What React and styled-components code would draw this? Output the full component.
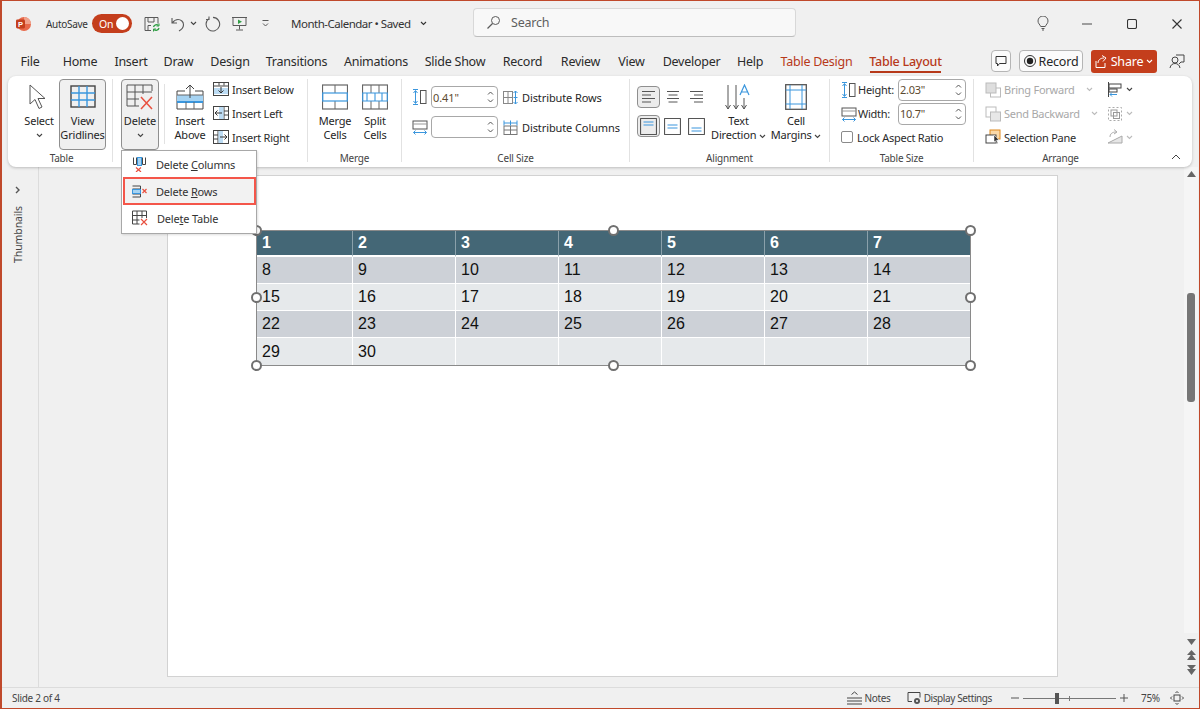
import React from 'react';
import styled, { createGlobalStyle } from 'styled-components';

const Global = createGlobalStyle`
  html, body { margin: 0; padding: 0; background: #f0f0f0; }
  * { box-sizing: border-box; }
  #root { width: 1200px; height: 709px; overflow: hidden; }
`;
const UI = `"Noto Sans", "Open Sans", sans-serif`;
const RED = '#c43e1c';
const BLUE = '#3a96dd';
const GR = '#5a5a5a';
const XR = '#e8503f';

const Win = styled.div`
  width: 1200px; height: 709px; display: flex; flex-direction: column; overflow: hidden; position: relative;
  background: #f0f0f0; border: 1px solid #c0492b; border-left-width: 2px;
  font-family: ${UI}; color: #262626; font-size: 11px; letter-spacing: -0.2px;
`;
const TitleBar = styled.div`display: flex; align-items: center; height: 45px; flex: none; position: relative;`;
const Slot = styled.div`
  flex: none; display: flex; align-items: center; justify-content: center;
  width: ${p => p.$w}px; margin-left: ${p => p.$ml || 0}px;
`;
const AutoSave = styled(Slot)`font-size: 10px; letter-spacing: -0.3px; color: #333; white-space: nowrap; justify-content: flex-start;`;
const Toggle = styled.div`
  width: 40px; height: 19px; flex: none; margin-left: 5px; border-radius: 10px; background: ${RED}; color: #fff;
  display: flex; align-items: center; justify-content: space-between; padding: 0 3px 0 7px; font-size: 10.5px;
`;
const Knob = styled.span`width: 13px; height: 13px; border-radius: 50%; background: #fff;`;
const DocName = styled(Slot)`font-size: 11.5px; color: #333; white-space: nowrap; justify-content: flex-start; letter-spacing: -0.5px;`;
const SearchBox = styled.div`
  flex: none; width: 323px; height: 29px; margin-left: 45px; margin-top: -2px; background: #f8f8f8; border: 1px solid #d8d8d8;
  border-bottom-color: #bdbdbd; border-radius: 4px; display: flex; align-items: center; padding-left: 12px; gap: 10px;
  color: #5e5e5e; font-size: 12.5px;
`;
const TabRow = styled.div`display: flex; align-items: center; height: 30px; flex: none; padding-left: 19px;`;
const Tab = styled.div`
  flex: none; width: ${p => p.$w}px; margin-right: ${p => p.$gap}px; height: 30px; line-height: 31px; text-align: center;
  font-size: 12.5px; white-space: nowrap; position: relative; letter-spacing: -0.25px;
  color: ${p => (p.$ctx ? '#b7391a' : '#2b2b2b')};
  display: flex; justify-content: center;
  ${p => p.$active && `font-weight: 500; &::after { content: ''; position: absolute; left: 0; right: 0; bottom: 3px; height: 2px; background: #b7391a; }`}
`;
const TabTools = styled.div`margin-left: auto; display: flex; align-items: center;`;
const OutlineBtn = styled.div`
  flex: none; height: 22px; width: ${p => p.$w}px; margin-left: ${p => p.$ml}px; background: #fbfbfb; border: 1px solid #b5b5b5; border-radius: 4px;
  display: flex; align-items: center; justify-content: center; gap: 3px; font-size: 12.5px; color: #262626;
`;
const ShareBtn = styled.div`
  flex: none; height: 23px; width: 66px; margin-left: 8px; background: ${RED}; color: #fff; border-radius: 3px;
  display: flex; align-items: center; justify-content: center; gap: 3px; font-size: 12.5px;
`;
const Ribbon = styled.div`
  margin-left: 6px; width: 1184px; height: 91px; flex: none; background: #fff; border-radius: 8px; display: flex; position: relative; z-index: 2;
  box-shadow: 0 1px 3px rgba(0,0,0,.22);
`;
const Group = styled.div`
  flex: none; width: ${p => p.$w}px; height: 83px; margin-top: 3px; display: flex; flex-direction: column;
  border-right: ${p => (p.$last ? 'none' : '1px solid #e2e2e2')};
`;
const Body = styled.div`
  height: 71px; flex: none; display: flex; padding-left: ${p => p.$pl}px; padding-top: ${p => p.$pt || 0}px;
  margin-top: ${p => p.$mt || 0}px; margin-bottom: ${p => -(p.$mt || 0)}px;
`;
const GroupLabel = styled.div`height: 12px; line-height: 16px; text-align: center; font-size: 10px; color: #444; padding-left: ${p => p.$pl || 0}px;`;
const Large = styled.div`
  flex: none; width: ${p => p.$w}px; margin-left: ${p => p.$ml || 0}px; height: 71px; display: flex; flex-direction: column; align-items: center;
  padding-top: 5px; line-height: 14px; text-align: center; font-size: 11px; border-radius: 4px; white-space: nowrap;
  border: 1px solid ${p => (p.$on ? '#8f8f8f' : 'transparent')}; background: ${p => (p.$on ? '#f0f0f0' : 'transparent')};
  & > svg:first-child { flex: none; margin-bottom: 4px; margin-top: -1px; }
`;
const Chev = styled.span`display: inline-flex; vertical-align: middle; margin-left: ${p => p.$ml || 0}px;`;
const ChevLine = styled.span`display: flex; height: 14px; align-items: center; justify-content: center;`;
const VDiv = styled.div`flex: none; width: 1px; height: 60px; background: #e2e2e2; margin: 5px 6px 0 5px;`;
const SmallCol = styled.div`
  display: flex; flex-direction: column; flex: none; margin-left: ${p => p.$ml || 0}px; margin-top: ${p => p.$mt || 0}px;
  ${p => p.$w && `width: ${p.$w}px;`}
`;
const SmallRow = styled.div`
  display: flex; align-items: center; height: 24px; gap: 3px; white-space: nowrap; font-size: 11px; letter-spacing: -0.25px;
  color: ${p => (p.$off ? '#a8a8a8' : '#2b2b2b')};
`;
const FieldLabel = styled.span`flex: none; width: 36px; margin-left: -2px;`;
const SizeStack = styled.div`display: flex; flex-direction: column; gap: 8px; letter-spacing: -0.1px;`;
const SizeRow = styled.div`display: flex; align-items: center; height: 22px; white-space: nowrap;`;
const Num = styled.div`
  flex: none; width: ${p => p.$w}px; height: 22px; margin-left: ${p => p.$ml}px; margin-right: ${p => p.$mr || 0}px; border: 1px solid #a8a8a8; border-radius: 4px; background: #fff;
  display: flex; align-items: center; justify-content: space-between; padding: 0 3px 0 1px; font-size: 11px; color: #5c4a30;
`;
const Spin = styled.span`display: flex; flex-direction: column; gap: 4px;`;
const AlignGrid = styled.div`
  display: grid; grid-template-columns: repeat(3, 23px); grid-auto-rows: 22px; column-gap: 1px; row-gap: 7px; flex: none; margin-top: 7px; align-self: flex-start;
`;
const AlignBtn = styled.div`
  display: flex; align-items: center; justify-content: center; border-radius: 4px;
  border: 1px solid ${p => (p.$on ? '#8f8f8f' : 'transparent')}; background: ${p => (p.$on ? '#ececec' : 'transparent')};
`;
const Check = styled.span`width: 12px; height: 12px; flex: none; border: 1px solid #8a8a8a; border-radius: 2px; background: #fff; margin-right: 1px;`;
const Collapse = styled.div`flex: 1; display: flex; align-items: flex-end; justify-content: center; padding-bottom: 7px; padding-left: 12px;`;
const Main = styled.div`flex: 1; display: flex; min-height: 0; margin-top: -1px;`;
const Rail = styled.div`
  flex: none; width: 37px; border-right: 1px solid #dcdcdc; display: flex; flex-direction: column; align-items: center; padding: 20px 4px 0 0; gap: 12px;
`;
const RailText = styled.div`writing-mode: vertical-rl; transform: rotate(180deg); font-size: 10.5px; color: #444; line-height: 12px; letter-spacing: -0.1px;`;
const Canvas = styled.div`flex: 1; padding: 9px 0 0 128px; min-width: 0;`;
const Slide = styled.div`width: 891px; height: 502px; background: #fff; border: 1px solid #d2d2d2; padding: 54px 0 0 88px;`;
const TableWrap = styled.div`position: relative; width: 715px; height: 136px; border: 1px solid #8a8a8a;`;
const Tbl = styled.table`
  border-collapse: separate; border-spacing: 0; table-layout: fixed; width: 713px; height: 134px; font-family: "Liberation Sans", Arial, sans-serif; font-size: 16px; letter-spacing: 0; color: #111;
`;
const Td = styled.td`
  padding: 0 0 0 5px; width: ${p => p.$w}px; height: ${p => p.$h || 27}px; line-height: 1;
  background: ${p => p.$bg};
  border-right: 1px solid #fff; border-bottom: 1px solid #fff;
  &:last-child { border-right: none; }
  tr:last-child > & { border-bottom: none; }
`;
const HeadCell = styled(Td).attrs({ as: 'th' })`
  color: #fff; font-weight: 700; text-align: left; border-right-color: #8aa0aa; border-bottom: 2px solid #fff;
`;
const Handle = styled.span`
  position: absolute; left: ${p => p.$x}px; top: ${p => p.$y}px; width: 11px; height: 11px; margin: -6px 0 0 -6px;
  border-radius: 50%; background: #fff; border: 2px solid #707070;
`;
const Scroll = styled.div`
  flex: none; width: 14px; margin-right: 1px; margin-top: 1px; background: #f5f5f5; height: 466px; display: flex; flex-direction: column; align-items: center; padding-top: 4px;
`;
const ScrollWrap = styled.div`flex: none; display: flex; flex-direction: column; align-items: center; height: 100%;`;
const Thumb = styled.div`flex: none; width: 8px; height: 109px; border-radius: 3px; background: #767676; margin-top: 116px;`;
const Pager = styled.div`display: flex; flex-direction: column; align-items: center; gap: 5px; margin-top: 6px; margin-right: 1px;`;
const StatusBar = styled.div`
  flex: none; height: 21px; border-top: 1px solid #dcdcdc; display: flex; align-items: center; padding-left: 10px; font-size: 10px; color: #444; letter-spacing: -0.3px;
`;
const StatusRight = styled.div`margin-left: auto; display: flex; align-items: center;`;
const StatusItem = styled.div`
  display: flex; align-items: center; gap: 2px; margin-left: ${p => p.$ml}px; white-space: nowrap;
  ${p => p.$w && `width: ${p.$w}px;`}
`;
const DisplayText = styled.span`letter-spacing: -0.4px;`;
const SliderTrack = styled.div`width: 93px; height: 1px; background: #777; position: relative; margin: 0 2px;`;
const SliderThumb = styled.span`position: absolute; left: 32px; top: -5px; width: 4px; height: 11px; background: #555;`;
const SliderTick = styled.span`position: absolute; left: 46px; top: -2px; width: 1px; height: 5px; background: #777;`;
const Menu = styled.div`
  position: absolute; left: 119px; top: 149px; width: 136px; height: 84px; background: #fff; border: 1px solid #a8a8a8; z-index: 5;
  display: flex; flex-direction: column; padding: 0 0 2px; box-shadow: 1px 1px 2px rgba(0,0,0,.12);
`;
const MenuItem = styled.div`
  flex: 1; display: flex; align-items: center; gap: 9px; padding-left: 10px; font-size: 11px; color: #333; letter-spacing: -0.2px; white-space: nowrap;
  ${p => p.$hot && `margin: 0 0 0 1px; border: 2px solid #f4564a; background: #f2f2f2; padding-left: 7px; height: 28px; flex: none;`}
`;

const Svg = ({ s = 16, w, h, children, ...r }) => (
  <svg width={w || s} height={h || s} viewBox={`0 0 ${w || s} ${h || s}`} fill="none" stroke={GR} strokeWidth="1" {...r}>{children}</svg>
);
const Chevron = ({ c = '#444', s = 7 }) => (
  <svg width={s} height={5} viewBox="0 0 7 5" fill="none" stroke={c} strokeWidth="1.1"><path d="M1 1l2.5 2.5L6 1" /></svg>
);
const Up = () => <svg width={7} height={4} viewBox="0 0 7 4" fill="none" stroke="#555"><path d="M1 3.5l2.5-2.5L6 3.5" /></svg>;
const Dn = () => <svg width={7} height={4} viewBox="0 0 7 4" fill="none" stroke="#555"><path d="M1 .5l2.5 2.5L6 .5" /></svg>;
const Spinner = () => <Spin><Up /><Dn /></Spin>;

const Logo = () => (
  <Svg s={16} stroke="none">
    <circle cx="9" cy="8" r="7" fill="#e8694a" />
    <path d="M9 1a7 7 0 0 1 7 7H9z" fill="#f0a28c" />
    <rect x="1" y="3.5" width="9" height="9" rx="1.4" fill="#c43e1c" />
    <text x="5.4" y="10.8" fontSize="7.5" fill="#fff" textAnchor="middle" fontFamily="Liberation Sans" fontWeight="700">P</text>
  </Svg>
);
const SaveI = () => (
  <Svg s={16}><path d="M1 1.5h13v6M1 1.5v13h6" /><path d="M4 2v4h6V2M4 14V9.5h3" /><path d="M9.5 11a3 3 0 0 1 5-1.5M15 12a3 3 0 0 1-5 1.5" stroke="#2f9e44" strokeWidth="1.3" /><path d="M15 7.5v2.5h-2.5M9.5 15.5V13H12" stroke="#2f9e44" /></Svg>
);
const UndoI = () => <Svg s={16}><path d="M2 2v5h5M2.3 6.8C4 4.5 6 3.5 8 3.5c3 0 5.5 2.3 5.5 5.2 0 2.4-1.6 4.6-4.5 6.3" strokeWidth="1.1" /></Svg>;
const RedoI = () => <Svg s={16}><path d="M4 2.6A6.8 6.8 0 1 0 8 1.4M4 .5v3h-3" strokeWidth="1.1" /></Svg>;
const PresentI = () => <Svg s={15}><path d="M1 1.5h13v8H1zM7.5 9.5v4M4 14h7M0 1.5h15" /><path d="M6 3.5l4 2.2-4 2.2z" fill="#2f9e44" stroke="none" /></Svg>;
const CustomI = () => <Svg s={9}><path d="M1.5 1.5h6M2 4.5l2.5 2.5L7 4.5" /></Svg>;
const SearchI = () => <Svg s={15}><circle cx="9.5" cy="5.5" r="4" /><path d="M6.5 8.5L1.5 13.5" strokeWidth="1.2" /></Svg>;
const BulbI = () => <Svg s={14} w={12} h={15}><path d="M3.7 10.5C3 8.5 1 7.5 1 5a5 5 0 0 1 10 0c0 2.5-2 3.5-2.7 5.5zM4.5 12.5h3M5 14h2" /></Svg>;
const MinI = () => <Svg s={10}><path d="M0 5h10" strokeWidth="1.1" /></Svg>;
const MaxI = () => <Svg s={10}><rect x=".5" y=".5" width="9" height="9" rx="1.6" stroke="#333" strokeWidth="1.1" /></Svg>;
const CloseI = () => <Svg s={10}><path d="M.5.5l9 9M9.5.5l-9 9" stroke="#333" strokeWidth="1.1" /></Svg>;
const CommentI = () => <Svg s={12}><path d="M1 1.5h10v7H4.5L2.5 11V8.5H1z" stroke="#333" /></Svg>;
const RecDot = () => <Svg s={12}><circle cx="6" cy="6" r="5.5" stroke="#333" /><circle cx="6" cy="6" r="3.2" fill="#222" stroke="none" /></Svg>;
const ShareI = () => <Svg s={13} stroke="#fff"><path d="M1 6v6.5h9V8M3 8c0-3 2.5-5 6-5M7 .5L11 3 8 6.5" /></Svg>;
const PersonI = () => <Svg s={16} stroke="#444"><circle cx="6" cy="7" r="3" /><path d="M1 15c.5-3 2.5-4.5 5-4.5s4.500 1.500 5 4.500M7 2h8v7h-3l-2 2" /></Svg>;

const Cursor = () => <Svg w={24} h={26}><path d="M3 1v19l5-4.500 4 9 3-1.500-4-8.500h7z" fill="#fff" stroke="#555" /></Svg>;
const GridView = () => (
  <Svg w={26} h={26}><rect x="1" y="2" width="24" height="21" stroke="#444" strokeWidth="1.4" /><path d="M1 9h24M1 16h24M9 2v21M17 2v21" stroke={BLUE} strokeWidth="1.4" /></Svg>
);
const DeleteT = () => (
  <Svg w={28} h={26}><path d="M1 1h25v6M1 1v21h12M1 8h25M1 15h12M9 1v21M17 1v9" stroke="#555" /><path d="M15 13l11 12M26 13L15 25" stroke={XR} strokeWidth="1.5" /></Svg>
);
const InsAbove = () => (
  <Svg w={28} h={26}><path d="M1 7h8M19 7h8M1 7v18h26V7" stroke="#444" /><rect x="1" y="11" width="26" height="7" fill="#a6d3f2" stroke="none" /><path d="M1 18h26" stroke={BLUE} strokeWidth="2" /><path d="M1 11h26M10 18v7M18 18v7" stroke="#666" /><path d="M14 14V2M10 5l4-4 4 4" stroke="#444" /></Svg>
);
const InsBelow = () => <Svg s={16}><rect x=".5" y="1.500" width="15" height="13" stroke="#444" /><path d="M.5 5h15M6 1.500v3M11 1.500v3" stroke="#444" /><rect x="1" y="7" width="14" height="6" fill="#bcdcf4" stroke="none" /><path d="M8 6v6M5.500 9.500L8 12l2.500-2.500" stroke="#333" /></Svg>;
const InsLeft = () => <Svg s={16}><rect x=".5" y="1.500" width="15" height="13" stroke="#444" /><path d="M11 1.500v13M11 6h4M11 10h4" stroke="#444" /><rect x="6" y="2" width="4.500" height="12" fill="#bcdcf4" stroke="none" /><path d="M9 8H2M4.500 5.500L2 8l2.500 2.500" stroke="#333" /></Svg>;
const InsRight = () => <Svg s={16}><rect x=".5" y="1.500" width="15" height="13" stroke="#444" /><path d="M5 1.500v13M1 6h4M1 10h4" stroke="#444" /><rect x="5.500" y="2" width="4.500" height="12" fill="#bcdcf4" stroke="none" /><path d="M7 8h7M11.500 5.500L14 8l-2.500 2.500" stroke="#333" /></Svg>;
const MergeI = () => (
  <Svg w={26} h={26}><rect x=".5" y="1" width="25" height="24" stroke="#666" strokeWidth="1.2" /><path d="M13 1v8M13 17v8" stroke="#666" /><rect x=".7" y="9" width="24.600" height="8" stroke={BLUE} strokeWidth="1.2" /></Svg>
);
const SplitI = () => (
  <Svg w={26} h={26}><rect x=".5" y="1" width="25" height="24" stroke="#666" strokeWidth="1.2" /><path d="M9 1v8M17 1v8M9 17v8M17 17v8" stroke="#666" /><path d="M.7 9h24.600v8H.7zM5 9v8M13 9v8M20 9v8" stroke={BLUE} strokeWidth="1.100" /></Svg>
);
const HeightI = () => <Svg s={16}><path d="M3.500 2v12M1.500 4l2-2.500 2 2.500M1.500 12l2 2.500 2-2.500M1 .5h5M1 15.500h5" stroke={BLUE} /><rect x="8.500" y="1.500" width="5.500" height="13" stroke="#555" /></Svg>;
const WidthI = () => <Svg s={16}><rect x="1" y="2" width="14" height="8" stroke="#555" /><path d="M1 5h14" stroke="#999" /><path d="M1.500 13.500h13M3.500 11.500l-2 2 2 2M12.500 11.500l2 2-2 2" stroke={BLUE} /></Svg>;
const DistR = () => <Svg s={15}><rect x=".5" y="1.500" width="9" height="12" stroke="#888" /><path d="M5 1.500v12M.5 7.500h9" stroke="#888" /><path d="M12.500 1v13M10.500 3L12.500 1l2 2M10.500 12l2 2 2-2M10.500 7.500h4" stroke={BLUE} /></Svg>;
const DistC = () => <Svg s={15}><rect x="1" y="6" width="13" height="8.500" stroke="#777" /><path d="M7.500 6v8.500M1 10h13" stroke="#777" /><path d="M1 3h13M1 .5v5M14 .5v5M7.500 .5v5" stroke={BLUE} /></Svg>;
const Lines = ({ a }) => {
  const x = a === 'c' ? [3, 4.5, 3, 4.5] : a === 'r' ? [2, 6, 2, 6] : [2, 2, 2, 2];
  const w = a === 'r' ? [13, 9, 13, 9] : a === 'c' ? [12, 9, 12, 9] : [13, 9, 13, 9];
  return <Svg s={16} w={17} h={14}>{[1.5, 5, 8.500, 12].map((y, i) => <path key={y} d={`M${x[i]} ${y}h${w[i]}`} stroke="#555" />)}</Svg>;
};
const CellAlign = ({ y }) => <Svg s={17}><rect x=".5" y=".5" width="16" height="16" rx=".5" stroke="#555" strokeWidth="1.200" /><path d={`M3.500 ${y}h10M3.500 ${y + 3}h10`} stroke={BLUE} strokeWidth="1.200" /></Svg>;
const TextDirI = () => (
  <Svg w={28} h={26}><path d="M3 1v24M.5 21L3 25l2.500-4M11 1v24M8.500 21L11 25l2.500-4M19 14v11M16.500 21L19 25l2.500-4" stroke="#555" /><path d="M15 11l4.500-10L24 11M16.500 8h6" stroke={BLUE} strokeWidth="1.200" /></Svg>
);
const MarginsI = () => (
  <Svg w={22} h={26}><rect x=".7" y=".7" width="20.600" height="24.600" stroke="#555" strokeWidth="1.300" /><path d="M.7 6h20.600M.7 20h20.600M5 1v24M17 1v24" stroke={BLUE} /></Svg>
);
const TwoBoxes = ({ c = '#bbb' }) => <Svg s={16}><rect x="5.500" y="6" width="10" height="9" fill="#fff" stroke={c} /><rect x="1" y="1" width="10" height="10" fill="#dedede" stroke={c} /></Svg>;
const TwoBoxesB = ({ c = '#bbb' }) => <Svg s={16}><rect x="1" y="1" width="10" height="10" fill="#fff" stroke={c} /><rect x="5.500" y="6" width="10" height="9" fill="#e8e8e8" stroke={c} /></Svg>;
const SelPane = () => <Svg s={16}><rect x="5" y="1" width="10" height="9" fill="#fbd9a8" stroke="#e08a1e" /><rect x="1" y="6" width="10" height="8" fill="#fff" stroke="#444" /><path d="M9 6l5 5-2.500.3 1.500 3-1.200.5-1.400-3L9 13z" fill="#333" stroke="#fff" strokeWidth=".5" /></Svg>;
const AlignI = () => <Svg s={16}><path d="M1.500 0v15" stroke="#444" /><rect x="2" y="2" width="12" height="4" stroke="#444" /><rect x="2" y="7" width="8" height="3" stroke="#444" /><path d="M10 12.500H3M5 10.500l-2 2 2 2" stroke={BLUE} /></Svg>;
const GroupI = () => <Svg s={16}><rect x="1.500" y="1.500" width="13" height="13" stroke="#aaa" strokeDasharray="2 2" /><rect x="4" y="4" width="6" height="6" stroke="#999" /><rect x="6.500" y="6.500" width="6" height="6" stroke="#999" /></Svg>;
const RotateI = () => <Svg s={16}><path d="M1 14L15 7v7z" fill="#e6e6e6" stroke="#aaa" /><path d="M3 8c0-3 2-5 6-5M7 .5L10 3 7 5" stroke="#aaa" /></Svg>;
const DelCols = () => <Svg s={15}><path d="M1.500 .5v7h3v-7M10.500 .5v7h3v-7" stroke="#444" /><rect x="5.500" y=".5" width="4" height="8" fill="#a6d3f2" stroke={BLUE} /><path d="M4 10.500l5 4.500M9 10.500L4 15" stroke={XR} strokeWidth="1.200" /></Svg>;
const DelRows = () => <Svg s={15}><path d="M.5 2h8v3h-8M.5 10h8v3h-8" stroke="#444" /><rect x=".5" y="5.500" width="8" height="4" fill="#a6d3f2" stroke={BLUE} /><path d="M10.500 5l4 4M14.500 5l-4 4" stroke={XR} strokeWidth="1.200" /></Svg>;
const DelTable = () => <Svg s={16}><path d="M.5 1h14v7M.5 1v13h7M.5 5.500h14M.5 10h7M5 1v13M10 1v7" stroke="#444" /><path d="M9 9l6 6M15 9l-6 6" stroke={XR} strokeWidth="1.200" /></Svg>;
const NotesI = () => <Svg w={15} h={14}><path d="M4.500 3.500L7.500 1l3 2.500M0 7h15M0 10h15M0 13h15" stroke="#444" /></Svg>;
const DisplayI = () => <Svg w={15} h={14}><path d="M5 10.500H1v-9h12v5" stroke="#444" /><circle cx="10" cy="10" r="3" fill="#555" stroke="none" /><circle cx="10" cy="10" r="1" fill="#fff" stroke="none" /></Svg>;
const FitI = () => <Svg s={14}><rect x="4" y="4" width="6" height="6" stroke="#444" /><path d="M5.500 2L7 .5 8.500 2M5.500 12L7 13.500 8.500 12M2 5.500L.5 7 2 8.500M12 5.500L13.500 7 12 8.500" stroke="#444" /></Svg>;
const Tri = ({ d }) => <svg width="9" height="6" viewBox="0 0 9 6" fill="#666"><path d={d === 'u' ? 'M4.500 0L9 6H0z' : 'M4.500 6L9 0H0z'} /></svg>;
const Dbl = ({ d }) => <svg width="9" height="10" viewBox="0 0 9 10" fill="#666"><path d={d === 'u' ? 'M4.500 0L9 5H0zM4.500 4L9 10H0z' : 'M0 0h9L4.500 5zM0 4h9L4.500 10z'} /></svg>;

const TABS = [
  ['File', 18, 24], ['Home', 34, 18], ['Insert', 32, 17], ['Draw', 29, 18], ['Design', 38, 17], ['Transitions', 61, 17],
  ['Animations', 64, 17], ['Slide Show', 60, 18], ['Record', 39, 19], ['Review', 39, 18], ['View', 27, 18], ['Developer', 57, 17], ['Help', 26, 18],
];
const COLS = [96, 103, 103, 103, 103, 103, 102];
const ROWS = [[8, 9, 10, 11, 12, 13, 14], [15, 16, 17, 18, 19, 20, 21], [22, 23, 24, 25, 26, 27, 28], [29, 30, '', '', '', '', '']];
const HANDLES = [[0, 0], [357, 0], [714, 0], [0, 67], [714, 67], [0, 135], [357, 135], [714, 135]];

export default function App() {
  return (
    <Win>
      <Global />
      <TitleBar>
        <Slot $w={16} $ml={13}><Logo /></Slot>
        <AutoSave $w={41} $ml={15}>AutoSave</AutoSave>
        <Toggle>On<Knob /></Toggle>
        <Slot $w={16} $ml={12}><SaveI /></Slot>
        <Slot $w={16} $ml={10}><UndoI /></Slot>
        <Slot $w={7} $ml={4}><Chevron /></Slot>
        <Slot $w={16} $ml={8}><RedoI /></Slot>
        <Slot $w={15} $ml={11}><PresentI /></Slot>
        <Slot $w={9} $ml={14}><CustomI /></Slot>
        <DocName $w={122} $ml={21}>Month-Calendar • Saved</DocName>
        <Slot $w={9} $ml={6}><Chevron c="#333" s={9} /></Slot>
        <SearchBox><SearchI />Search</SearchBox>
        <Slot $w={12} $ml={241}><BulbI /></Slot>
        <Slot $w={10} $ml={33}><MinI /></Slot>
        <Slot $w={10} $ml={35}><MaxI /></Slot>
        <Slot $w={10} $ml={35}><CloseI /></Slot>
      </TitleBar>
      <TabRow>
        {TABS.map(([t, w, g]) => <Tab key={t} $w={w} $gap={g}>{t}</Tab>)}
        <Tab $w={71} $gap={18} $ctx>Table Design</Tab>
        <Tab $w={71} $gap={0} $ctx $active>Table Layout</Tab>
        <TabTools>
          <OutlineBtn $w={20} $ml={50}><CommentI /></OutlineBtn>
          <OutlineBtn $w={64} $ml={8}><RecDot />Record</OutlineBtn>
          <ShareBtn><ShareI />Share<Chevron c="#fff" /></ShareBtn>
          <Slot $w={16} $ml={12}><PersonI /></Slot>
          <Slot $w={14} />
        </TabTools>
      </TabRow>
      <Ribbon>
        <Group $w={105}>
          <Body $pl={14}>
            <Large $w={34}><Cursor /><span>Select</span><ChevLine><Chevron /></ChevLine></Large>
            <Large $w={47} $ml={3} $on><GridView /><span>View<br />Gridlines</span></Large>
          </Body>
          <GroupLabel $pl={3}>Table</GroupLabel>
        </Group>
        <Group $w={195}>
          <Body $pl={8}>
            <Large $w={38} $on><DeleteT /><span>Delete</span><ChevLine><Chevron /></ChevLine></Large>
            <VDiv />
            <Large $w={38}><InsAbove /><span>Insert<br />Above</span></Large>
            <SmallCol $ml={4} $mt={-2}>
              <SmallRow><InsBelow />Insert Below</SmallRow>
              <SmallRow><InsLeft />Insert Left</SmallRow>
              <SmallRow><InsRight />Insert Right</SmallRow>
            </SmallCol>
          </Body>
          <GroupLabel />
        </Group>
        <Group $w={94}>
          <Body $pl={7}>
            <Large $w={40}><MergeI /><span>Merge<br />Cells</span></Large>
            <Large $w={40}><SplitI /><span>Split<br />Cells</span></Large>
          </Body>
          <GroupLabel>Merge</GroupLabel>
        </Group>
        <Group $w={228}>
          <Body $pl={10} $pt={7}>
            <SizeStack>
              <SizeRow><HeightI /><Num $w={67} $ml={3} $mr={5}>0.41"<Spinner /></Num><DistR /><Slot $w={4} />Distribute Rows</SizeRow>
              <SizeRow><WidthI /><Num $w={67} $ml={3} $mr={5}><span /><Spinner /></Num><DistC /><Slot $w={4} />Distribute Columns</SizeRow>
            </SizeStack>
          </Body>
          <GroupLabel>Cell Size</GroupLabel>
        </Group>
        <Group $w={200}>
          <Body $pl={7}>
            <AlignGrid>
              <AlignBtn $on><Lines a="l" /></AlignBtn>
              <AlignBtn><Lines a="c" /></AlignBtn>
              <AlignBtn><Lines a="r" /></AlignBtn>
              <AlignBtn $on><CellAlign y={4} /></AlignBtn>
              <AlignBtn><CellAlign y={7} /></AlignBtn>
              <AlignBtn><CellAlign y={10} /></AlignBtn>
            </AlignGrid>
            <Large $w={55} $ml={3}><TextDirI /><span>Text<br />Direction <Chev><Chevron /></Chev></span></Large>
            <Large $w={56} $ml={2}><MarginsI /><span>Cell<br />Margins <Chev><Chevron /></Chev></span></Large>
          </Body>
          <GroupLabel>Alignment</GroupLabel>
        </Group>
        <Group $w={144}>
          <Body $pl={11} $mt={-1}>
            <SmallCol>
              <SmallRow><HeightI /><FieldLabel>Height:</FieldLabel><Num $w={68} $ml={1}>2.03"<Spinner /></Num></SmallRow>
              <SmallRow><WidthI /><FieldLabel>Width:</FieldLabel><Num $w={68} $ml={1}>10.7"<Spinner /></Num></SmallRow>
              <SmallRow><Check />Lock Aspect Ratio</SmallRow>
            </SmallCol>
          </Body>
          <GroupLabel>Table Size</GroupLabel>
        </Group>
        <Group $w={173} $last>
          <Body $pl={11} $mt={-1}>
            <SmallCol $w={122}>
              <SmallRow $off><TwoBoxes />Bring Forward<Chev $ml={8}><Chevron c="#bbb" /></Chev></SmallRow>
              <SmallRow $off><TwoBoxesB />Send Backward<Chev $ml={8}><Chevron c="#bbb" /></Chev></SmallRow>
              <SmallRow><SelPane />Selection Pane</SmallRow>
            </SmallCol>
            <SmallCol>
              <SmallRow><AlignI /><Chevron /></SmallRow>
              <SmallRow><GroupI /><Chevron c="#bbb" /></SmallRow>
              <SmallRow><RotateI /><Chevron c="#bbb" /></SmallRow>
            </SmallCol>
          </Body>
          <GroupLabel>Arrange</GroupLabel>
        </Group>
        <Collapse>
          <svg width="10" height="6" viewBox="0 0 10 6" fill="none" stroke="#444"><path d="M1 5l4-4 4 4" /></svg>
        </Collapse>
      </Ribbon>
      <Menu>
        <MenuItem><DelCols /><span>Delete <u>C</u>olumns</span></MenuItem>
        <MenuItem $hot><DelRows /><span>Delete <u>R</u>ows</span></MenuItem>
        <MenuItem><DelTable /><span>Dele<u>t</u>e Table</span></MenuItem>
      </Menu>
      <Main>
        <Rail>
          <svg width="6" height="8" viewBox="0 0 6 8" fill="none" stroke="#555" strokeWidth="1.400"><path d="M1 1l3 3-3 3" /></svg>
          <RailText>Thumbnails</RailText>
        </Rail>
        <Canvas>
          <Slide>
            <TableWrap>
              <Tbl>
                <tbody>
                  <tr>{COLS.map((w, i) => <HeadCell key={i} $w={w} $h={26} $bg="#446776">{i + 1}</HeadCell>)}</tr>
                  {ROWS.map((r, ri) => (
                    <tr key={ri}>{r.map((v, i) => <Td key={i} $w={COLS[i]} $bg={ri % 2 ? '#e6e9eb' : '#cdd1d7'}>{v}</Td>)}</tr>
                  ))}
                </tbody>
              </Tbl>
              {HANDLES.map(([x, y]) => <Handle key={`${x}-${y}`} $x={x} $y={y} />)}
            </TableWrap>
          </Slide>
        </Canvas>
        <ScrollWrap>
          <Scroll>
            <Tri d="u" />
            <Thumb />
          </Scroll>
          <Pager>
            <Tri d="d" />
            <Dbl d="u" />
            <Dbl d="d" />
          </Pager>
        </ScrollWrap>
      </Main>
      <StatusBar>
        Slide 2 of 4
        <StatusRight>
          <StatusItem $ml={0}><NotesI />Notes</StatusItem>
          <StatusItem $ml={16}><DisplayI /><DisplayText>Display Settings</DisplayText></StatusItem>
          <StatusItem $ml={19}>
            <svg width="8" height="2"><path d="M0 1h8" stroke="#555" /></svg>
            <SliderTrack><SliderThumb /><SliderTick /></SliderTrack>
            <svg width="8" height="8"><path d="M0 4h8M4 0v8" stroke="#555" /></svg>
          </StatusItem>
          <StatusItem $ml={13} $w={17}>75%</StatusItem>
          <StatusItem $ml={12}><FitI /></StatusItem>
          <Slot $w={15} />
        </StatusRight>
      </StatusBar>
    </Win>
  );
}
